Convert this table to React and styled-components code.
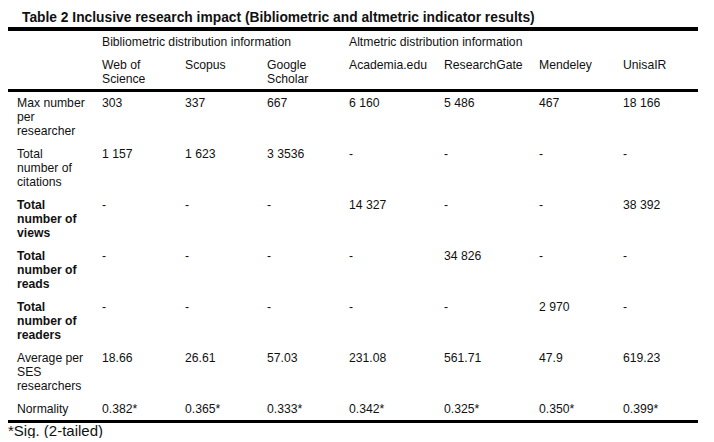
import React from 'react';
import styled, {createGlobalStyle} from 'styled-components';

const GlobalStyle = createGlobalStyle`
    body {
        margin: 8px;
        background: #fff;
        font-family: "Liberation Sans", Arial, sans-serif;
        color: #111;
    }
`;

const columns = [86, 83, 82, 82, 95, 95, 84, 83];

const sources = ['Web of Science', 'Scopus', 'Google Scholar', 'Academia.edu', 'ResearchGate', 'Mendeley', 'UnisaIR'];

const rows = [
    {label: 'Max number per researcher', values: ['303', '337', '667', '6 160', '5 486', '467', '18 166']},
    {label: 'Total number of citations', values: ['1 157', '1 623', '3 3536', '-', '-', '-', '-']},
    {label: 'Total number of views', bold: true, values: ['-', '-', '-', '14 327', '-', '-', '38 392']},
    {label: 'Total number of reads', bold: true, values: ['-', '-', '-', '-', '34 826', '-', '-']},
    {label: 'Total number of readers', bold: true, values: ['-', '-', '-', '-', '-', '2 970', '-']},
    {label: 'Average per SES researchers', values: ['18.66', '26.61', '57.03', '231.08', '561.71', '47.9', '619.23']},
    {label: 'Normality', single: true, values: ['0.382*', '0.365*', '0.333*', '0.342*', '0.325*', '0.350*', '0.399*']},
];

const Title = styled.h2`
    margin: 0;
    padding-left: 14px;
    font-size: 13.8px;
    line-height: 19px;
    font-weight: 700;
`;

const Table = styled.table`
    width: 690px;
    table-layout: fixed;
    border-collapse: separate;
    border-spacing: 0;
    border-top: 4px solid #000;
    border-bottom: 3.5px solid #000;
    font-size: 12.2px;
    line-height: 14px;
`;

const HeadRow = styled.tr``;

const GroupCell = styled.th`
    text-align: left;
    font-weight: 400;
    vertical-align: top;
    padding: 4px 4px 5px 8px;
`;

const SourceCell = styled.th`
    text-align: left;
    font-weight: 400;
    vertical-align: top;
    padding: 4px 4px 3px 8px;
    border-bottom: 3px solid #000;
`;

const Row = styled.tr``;

const Label = styled.td`
    vertical-align: top;
    padding: 4px 7px ${p => (p.$single ? '4px' : '5px')} 9px;
    font-weight: ${p => (p.$bold ? 700 : 400)};
`;

const Value = styled.td`
    vertical-align: top;
    padding: 4px 4px ${p => (p.$single ? '4px' : '5px')} 8px;
`;

const Note = styled.div`
    font-size: 15px;
    line-height: 15px;
`;

export default function App() {
    return (
        <>
            <GlobalStyle />
            <Title>Table 2 Inclusive research impact (Bibliometric and altmetric indicator results)</Title>
            <Table>
                <colgroup>
                    {columns.map((w, i) => <col key={i} style={{width: w}} />)}
                </colgroup>
                <thead>
                    <HeadRow>
                        <GroupCell />
                        <GroupCell colSpan={3}>Bibliometric distribution information</GroupCell>
                        <GroupCell colSpan={4}>Altmetric distribution information</GroupCell>
                    </HeadRow>
                    <HeadRow>
                        <SourceCell />
                        {sources.map(s => <SourceCell key={s}>{s}</SourceCell>)}
                    </HeadRow>
                </thead>
                <tbody>
                    {rows.map(r => (
                        <Row key={r.label}>
                            <Label $bold={r.bold} $single={r.single}>{r.label}</Label>
                            {r.values.map((v, i) => <Value key={i} $single={r.single}>{v}</Value>)}
                        </Row>
                    ))}
                </tbody>
            </Table>
            <Note>*Sig. (2-tailed)</Note>
        </>
    );
}
